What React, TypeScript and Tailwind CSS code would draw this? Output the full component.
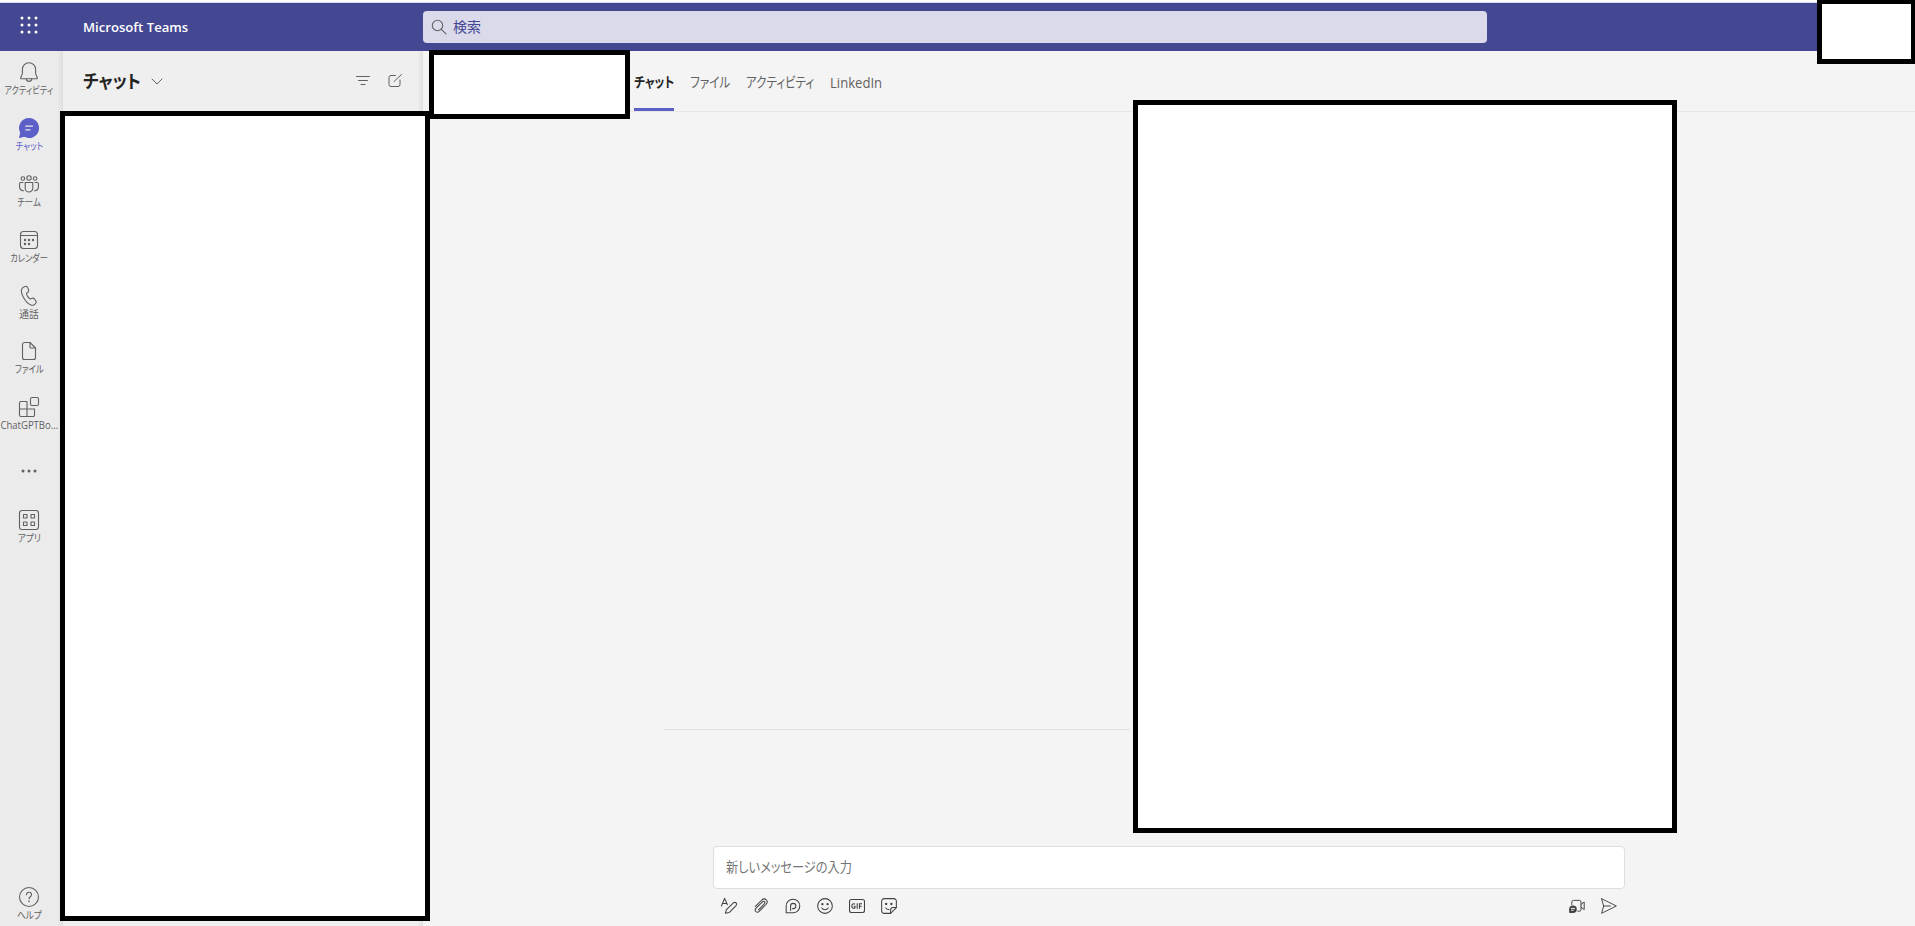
import type { ReactNode } from "react";

type IconProps = {
  size?: number;
  strokeWidth?: number;
  children: ReactNode;
};

const Icon = ({ size = 20, strokeWidth = 1.1, children }: IconProps) => (
  <svg
    width={size}
    height={size}
    viewBox="0 0 20 20"
    fill="none"
    stroke="currentColor"
    strokeWidth={strokeWidth}
    strokeLinecap="round"
    strokeLinejoin="round"
    className="block shrink-0 overflow-visible"
  >
    {children}
  </svg>
);

const BellIcon = () => (
  <Icon>
    <path d="M10 .7a6.600 6.600 0 0 0-6.600 6.600v4.300l-1.700 4.200c-.2.500.1.900.6.900h15.400c.5 0 .8-.4.600-.9l-1.700-4.200V7.300A6.600 6.600 0 0 0 10 .7Z" />
    <path d="M7.200 16.800a2.800 2.600 0 0 0 5.600 0" />
  </Icon>
);

const ChatIcon = () => (
  <Icon>
    <path
      d="M10 0a10 10 0 1 1-4.700 18.800L.8 20c-.4.1-.8-.3-.7-.7l1.100-4.500A10 10 0 0 1 10 0Z"
      fill="currentColor"
      stroke="none"
    />
    <path d="M6.800 8.200h6.600M6.800 11.800h4.200" stroke="#ebebeb" strokeWidth={1.3} />
  </Icon>
);

const TeamIcon = () => (
  <Icon>
    <circle cx="10" cy="4" r="2.200" />
    <circle cx="3.900" cy="4.500" r="1.800" />
    <circle cx="16.100" cy="4.500" r="1.800" />
    <path d="M6.200 8.500h7.600v5.700a3.800 3.800 0 0 1-7.600 0V8.500Z" />
    <path d="M4 8.500H1.600c-.6 0-1 .4-1 1V13c0 2.200 1.500 3.900 3.900 3.700M16 8.500h2.400c.6 0 1 .4 1 1V13c0 2.200-1.500 3.900-3.900 3.700" />
  </Icon>
);

const CalendarIcon = () => (
  <Icon>
    <rect x="1.500" y="1.500" width="17" height="17" rx="3" />
    <path d="M1.500 5.500h17" />
    <g fill="currentColor" stroke="none">
      <circle cx="6" cy="10" r="1.200" />
      <circle cx="10" cy="10" r="1.200" />
      <circle cx="14" cy="10" r="1.200" />
      <circle cx="6" cy="14" r="1.200" />
      <circle cx="10" cy="14" r="1.200" />
    </g>
  </Icon>
);

const PhoneIcon = () => (
  <Icon>
    <path d="m5.300.8 1-.3c1-.3 2 .2 2.400 1.100l.9 2.100c.3.800.1 1.700-.5 2.300L7.500 7.400c-.2 1.600 2.300 5.200 3.700 5.500l2.100-.7c.8-.2 1.700.1 2.200.8l1.300 1.900c.6.800.5 2-.3 2.700l-.8.700c-1 1-2.500 1.200-3.800.7-3-1.200-5.500-4-7.400-7.500C2.600 8 2 4.700 2.700 3.300c.4-1.200 1.400-2.200 2.600-2.500Z" />
  </Icon>
);

const FileIcon = () => (
  <Icon>
    <path d="M5.500 1.500H11l5.500 5.500v9.500a2 2 0 0 1-2 2h-9a2 2 0 0 1-2-2v-13a2 2 0 0 1 2-2Z" />
    <path d="M11 1.500v4.500a1 1 0 0 0 1 1h4.500" />
  </Icon>
);

const BotIcon = () => (
  <Icon>
    <path d="M8 4.500H2A1.500 1.500 0 0 0 .5 6v12A1.500 1.500 0 0 0 2 19.500h12a1.500 1.500 0 0 0 1.500-1.500v-6H.5M8 4.500v15" />
    <rect x="11.500" y=".5" width="8" height="8" rx="1.500" />
  </Icon>
);

const AppsIcon = () => (
  <Icon>
    <rect x=".5" y=".5" width="19" height="19" rx="2.500" />
    <rect x="4.500" y="4.500" width="3.500" height="3.500" />
    <rect x="12" y="4.500" width="3.500" height="3.500" />
    <rect x="4.500" y="12" width="3.500" height="3.500" />
    <rect x="12" y="12" width="3.500" height="3.500" />
  </Icon>
);

const HelpIcon = () => (
  <Icon>
    <circle cx="10" cy="10" r="9.500" />
    <path d="M7.500 7.800c0-1.600 1.100-2.500 2.500-2.500s2.500 1 2.500 2.400c0 2-2.500 2.100-2.500 4.300" />
    <circle cx="10" cy="14.400" r=".8" fill="currentColor" stroke="none" />
  </Icon>
);

type NavItemProps = {
  label: string;
  icon: ReactNode;
  className?: string;
  active?: boolean;
};

const navItems: NavItemProps[] = [
  { label: "アクティビティ", icon: <BellIcon />, className: "scale-x-[0.82]" },
  { label: "チャット", icon: <ChatIcon />, className: "scale-x-[0.84]", active: true },
  { label: "チーム", icon: <TeamIcon />, className: "scale-x-[0.84]" },
  { label: "カレンダー", icon: <CalendarIcon />, className: "scale-x-[0.82]" },
  { label: "通話", icon: <PhoneIcon />, className: "scale-x-[0.97]" },
  { label: "ファイル", icon: <FileIcon />, className: "scale-x-[0.84]" },
  { label: "ChatGPTBo...", icon: <BotIcon />, className: "scale-x-[0.95]" },
];

const NavItem = ({ label, icon, className = "", active }: NavItemProps) => (
  <div
    className={`flex h-14 w-[58px] shrink-0 flex-col items-center pt-[11px] ${
      active ? "text-[#5b5fc7]" : "text-[#616161]"
    }`}
  >
    {icon}
    <span
      className={`mt-px block text-[10px] leading-[14px] whitespace-nowrap ${className}`}
    >
      {label}
    </span>
  </div>
);

const AppRail = () => (
  <nav className="flex w-[58px] shrink-0 flex-col bg-[#ebebeb]">
    {navItems.slice(0, 5).map((item) => (
      <NavItem key={item.label} {...item} />
    ))}
    <div className="mt-[-1px] mb-px">
      {navItems.slice(5).map((item) => (
        <NavItem key={item.label} {...item} />
      ))}
    </div>
    <div className="flex h-14 items-center justify-center text-[#616161]">
      <svg width="16" height="4" viewBox="0 0 16 4" fill="currentColor">
        <circle cx="2" cy="2" r="1.500" />
        <circle cx="8" cy="2" r="1.500" />
        <circle cx="14" cy="2" r="1.500" />
      </svg>
    </div>
    <NavItem label="アプリ" icon={<AppsIcon />} className="scale-x-[0.86]" />
    <div className="mt-auto mb-[-6px]">
      <NavItem label="ヘルプ" icon={<HelpIcon />} className="scale-x-[0.86]" />
    </div>
  </nav>
);

const TopBar = () => (
  <header className="flex h-12 shrink-0 items-center bg-[#444791]">
    <div className="flex w-[83px] items-center pl-5">
      <svg width="18" height="18" viewBox="0 0 18 18" fill="#fff" className="mt-[-4px]">
        {[2, 9, 16].map((y) =>
          [2, 9, 16].map((x) => <circle key={`${x}-${y}`} cx={x} cy={y} r="1.500" />),
        )}
      </svg>
    </div>
    <div className="w-[340px] pt-px text-[13px] font-semibold text-white">
      <span className="inline-block origin-left scale-x-[1.01] whitespace-nowrap">
        Microsoft Teams
      </span>
    </div>
    <div className="flex h-8 w-[1064px] items-center rounded bg-[#dadaea] pl-2">
      <svg
        width="16"
        height="16"
        viewBox="0 0 16 16"
        fill="none"
        stroke="#616161"
        strokeWidth={1.1}
        strokeLinecap="round"
      >
        <circle cx="6.500" cy="6.500" r="5.200" />
        <path d="m10.300 10.300 4.700 4.500" />
      </svg>
      <span className="ml-1.5 text-[14px] leading-5 text-[#444791]">検索</span>
    </div>
  </header>
);

const ChatPanel = () => (
  <section className="flex w-[360px] shrink-0 justify-between bg-[#efefef]">
    <div className="flex h-[60px] items-center pl-5 text-[#616161]">
      <h1 className="w-[68px] text-[18px] font-bold text-[#242424]">
        <span className="inline-block origin-left scale-x-[0.93] whitespace-nowrap">
          チャット
        </span>
      </h1>
      <svg width="12" height="7" viewBox="0 0 12 7" fill="none" stroke="currentColor">
        <path d="m1 1 5 5 5-5" strokeLinecap="round" />
      </svg>
      <svg
        width="16"
        height="12"
        viewBox="0 0 16 12"
        fill="none"
        stroke="currentColor"
        strokeLinecap="round"
        className="ml-[192px]"
      >
        <path d="M1.500 1.500h13M3.500 5.500h9M6 9.500h4" />
      </svg>
      <svg
        width="16"
        height="16"
        viewBox="0 0 16 16"
        fill="none"
        stroke="currentColor"
        strokeLinecap="round"
        className="ml-4"
      >
        <path d="M8.500 2.500H4a2 2 0 0 0-2 2v7a2 2 0 0 0 2 2h7a2 2 0 0 0 2-2V7M7 8.500l7.500-7" />
      </svg>
    </div>
    <div className="w-[5px] bg-linear-to-r from-[#ececec] to-[#e2e2e2]" />
  </section>
);

const Tabs = () => (
  <div className="flex h-[61px] shrink-0 border-b border-[#e6e6e6] pl-[211px] text-[14px] leading-[61px] whitespace-nowrap text-[#616161]">
    <div className="h-[60px] w-10 border-b-[3px] border-[#5b5fc7] font-semibold text-[#242424]">
      <span className="inline-block origin-left scale-x-[0.83]">チャット</span>
    </div>
    <div className="ml-4 w-10">
      <span className="inline-block origin-left scale-x-[0.83]">ファイル</span>
    </div>
    <div className="ml-4 w-[68px]">
      <span className="inline-block origin-left scale-x-[0.82]">アクティビティ</span>
    </div>
    <div className="ml-4 pt-px">
      <span className="inline-block origin-left scale-x-[0.935]">LinkedIn</span>
    </div>
  </div>
);

const ComposeTools = () => (
  <div className="mt-2 flex h-[18px] items-center justify-between px-2 text-[#424242]">
    <div className="flex gap-4">
      <Icon size={16} strokeWidth={1.3}>
        <path d="M.5 10 4.500.5l3.500 8M2 7h5M5.500 19l1.300-4.500 8.700-8.300c2.500-2 5.500.8 3.300 3.300l-8.600 8.700L5.500 19Z" />
      </Icon>
      <Icon size={16} strokeWidth={1.3}>
        <path d="m3 10.500 8-8c4-3.500 9 1.200 5.500 5.300l-8.800 9c-3 2.500-6.500-1-4.200-3.900l8.300-8.200c2-1.500 4 .5 2.600 2.400l-7.600 7.600" />
      </Icon>
      <Icon size={16} strokeWidth={1.3}>
        <path d="M1.500 18.500V10a8.500 8.500 0 1 1 8.500 8.500H1.500Z" />
        <path d="M7 15.500V10a3.300 3.300 0 1 1 3.300 3.300H9.500" />
      </Icon>
      <Icon size={16} strokeWidth={1.3}>
        <circle cx="10" cy="10" r="9.200" />
        <path d="M6 12.500c2 2.800 6 2.800 8 0" />
        <circle cx="6.800" cy="7.700" r=".8" fill="currentColor" />
        <circle cx="13.200" cy="7.700" r=".8" fill="currentColor" />
      </Icon>
      <svg
        width="16"
        height="16"
        viewBox="0 0 16 16"
        fill="none"
        stroke="currentColor"
        strokeWidth={1.1}
        className="block"
      >
        <rect x=".5" y="1.500" width="15" height="13" rx="2" />
        <path d="M6 6.200c-1.600-1.200-3.200 0-3.200 1.800s1.700 2.900 3.200 1.700V8.200H4.800M8.200 5.300v5.400M10.500 10.700V5.700H13M10.500 8.200h2.200" />
      </svg>
      <Icon size={16} strokeWidth={1.3}>
        <path d="M4 .8h12a3 3 0 0 1 3.200 3v8.200l-7.200 7.200H4A3.200 3.200 0 0 1 .8 16V4A3.200 3.200 0 0 1 4 .8Z" />
        <path d="M19 12h-4a3 3 0 0 0-3 3v4M6 12.500c1 1.500 2.500 2 4 1.800" />
        <circle cx="6.500" cy="7.500" r=".8" fill="currentColor" />
        <circle cx="13" cy="7.500" r=".8" fill="currentColor" />
      </Icon>
    </div>
    <div className="flex gap-4">
      <Icon size={16} strokeWidth={1.2}>
        <path d="M3.500 8.500V5a2 2 0 0 1 2-2H13a2 2 0 0 1 2 2v9.500a2 2 0 0 1-2 2h-2M15 8l4-3v9.500l-4-3" />
        <circle cx="5" cy="14" r="4.700" fill="currentColor" stroke="none" />
        <path d="M.3 18.700V14H5v4.700Z" fill="currentColor" stroke="none" />
        <path d="M3 13h4M3 15.200h2.500" stroke="#f4f4f4" />
      </Icon>
      <Icon size={16} strokeWidth={1.2}>
        <path d="M.8.900 19.200 10 .8 19.100 3.300 10 .8.900ZM3.300 10h8.500" />
      </Icon>
    </div>
  </div>
);

const Conversation = () => (
  <main className="flex min-w-0 flex-1 flex-col bg-[#f4f4f4]">
    <Tabs />
    <div className="flex min-h-0 flex-1 flex-col justify-end">
      <div className="mb-[116px] ml-[241px] h-px w-[466px] bg-[#e0e0e0]" />
      <div className="mb-[11px] ml-[290px] w-[912px]">
        <div className="flex h-[43px] items-center rounded border border-[#dedede] bg-white pb-0.5 pl-3 text-[14px] text-[#757575]">
          <span className="inline-block origin-left scale-x-[0.873] whitespace-nowrap">
            新しいメッセージの入力
          </span>
        </div>
        <ComposeTools />
      </div>
    </div>
  </main>
);

const App = () => (
  <div className="relative flex h-[926px] w-[1915px] flex-col overflow-hidden bg-white font-['Open_Sans','Noto_Sans_CJK_JP',sans-serif] [font-feature-settings:'palt']">
    <div className="mt-0.5 h-px shrink-0 bg-[#d9d9ee]" />
    <TopBar />
    <div className="flex min-h-0 flex-1">
      <AppRail />
      <div className="w-[5px] shrink-0 bg-linear-to-r from-[#e9e9e9] to-[#dedede]" />
      <ChatPanel />
      <Conversation />
    </div>

    {/* Blanked-out areas over the window */}
    <div className="absolute top-[111px] left-[60px] h-[810px] w-[370px] border-[5px] border-black bg-white" />
    <div className="absolute top-[50px] left-[429px] h-[69px] w-[201px] border-[5px] border-black bg-white" />
    <div className="absolute top-[100px] left-[1133px] h-[733px] w-[544px] border-[5px] border-black bg-white" />
    <div className="absolute top-[-1px] left-[1817px] h-[65px] w-[99px] border-[5px] border-black bg-white" />
  </div>
);

export default App;
